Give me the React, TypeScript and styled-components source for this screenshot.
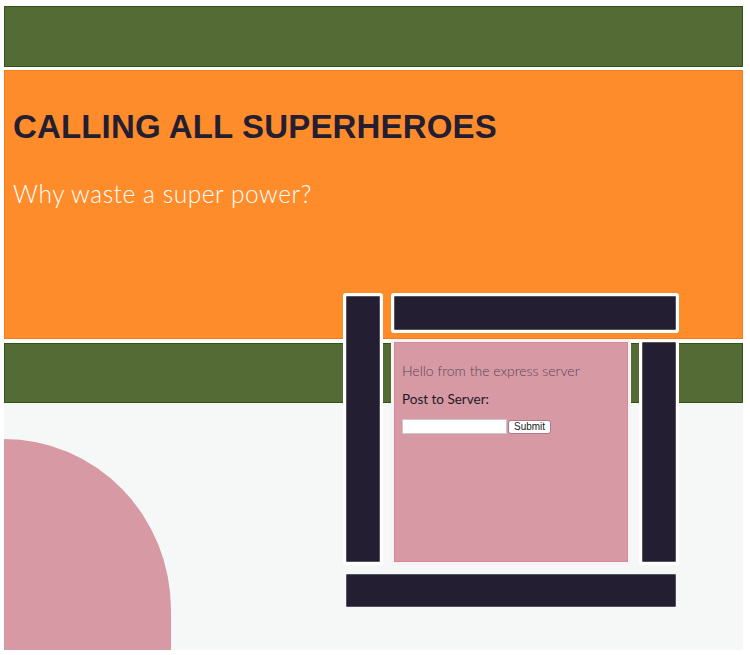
import styled, { createGlobalStyle } from 'styled-components'

const GlobalStyle = createGlobalStyle`
  body {
    margin: 0;
    background: #ffffff;
    font-family: 'Lato', 'Liberation Sans', sans-serif;
  }
`

const Page = styled.div`
  position: relative;
  width: 739px;
  margin: 6px 0 0 4px;
  display: flex;
  flex-direction: column;
`

const TopBar = styled.header`
  height: 59px;
  background: #546b36;
  border: 1px solid #2c5516;
`

const Hero = styled.section`
  margin-top: 3px;
  height: 269px;
  background: #ff8c2a;
  border: 1px solid #f47e1c;
  padding: 37px 0 0 8px;
  box-sizing: border-box;
`

const Title = styled.h1`
  margin: 0;
  font-family: 'Liberation Sans', Arial, sans-serif;
  font-weight: 700;
  font-size: 33px;
  letter-spacing: 0.15px;
  color: #241e33;
`

const Tagline = styled.p`
  margin: 33px 0 0;
  font-family: 'Lato', sans-serif;
  font-weight: 300;
  font-size: 24.5px;
  letter-spacing: 0.55px;
  color: #ffffff;
`

const NavBar = styled.nav`
  margin-top: 4px;
  height: 58px;
  background: #546b36;
  border: 1px solid #2c5516;
`

const Main = styled.main`
  height: 247px;
  background: #f5f8f7;
  padding-top: 36px;
  box-sizing: border-box;
  display: flex;
  align-items: flex-end;
`

const Blob = styled.div`
  width: 167px;
  height: 211px;
  background: #d799a4;
  border-top-right-radius: 167px 171px;
`

const Layout = styled.div`
  position: absolute;
  left: 342px;
  top: 290px;
  display: grid;
  grid-template-columns: 34px 234px 34px;
  grid-template-rows: 34px 220px 33px;
  column-gap: 14px;
  row-gap: 12px;
`

const Slab = styled.div<{ $col: string; $row: string }>`
  grid-column: ${(p) => p.$col};
  grid-row: ${(p) => p.$row};
  background: #241e33;
  border: 1px solid #55535c;
  border-radius: 1px;
  box-shadow: 0 0 0 3px ${(p) => (p.$row === '3' ? '#f5f8f7' : '#ffffff')};
`

const Content = styled.div`
  grid-column: 2;
  grid-row: 2;
  background: #d799a4;
  border: 1px solid #d58a97;
  box-shadow: 0 0 0 3px #f8f4f5;
  padding: 19px 7px 0;
  font-family: 'Lato', sans-serif;
`

const Greeting = styled.p`
  margin: 0;
  font-size: 14px;
  font-weight: 300;
  color: #574759;
`

const FormLabel = styled.p`
  margin: 12px 0 0;
  font-size: 13.5px;
  font-weight: 400;
  color: #1d1a26;
`

const Form = styled.form`
  display: flex;
  align-items: center;
  gap: 1px;
  margin-top: 12px;
`

const Field = styled.input`
  width: 105px;
  height: 15px;
  box-sizing: border-box;
  border: 1px solid #c9c9c9;
  background: #ffffff;
  font-size: 10px;
  padding: 0 2px;
`

const SubmitButton = styled.button`
  height: 14px;
  padding: 0 5px;
  font-family: 'Liberation Sans', Arial, sans-serif;
  font-size: 10px;
  line-height: 12px;
  color: #222;
  background: #ffffff;
  border: 1px solid #b07a84;
  border-radius: 3px;
`

export default function App() {
  return (
    <>
      <GlobalStyle />
      <Page>
        <TopBar />
        <Hero>
          <Title>CALLING ALL SUPERHEROES</Title>
          <Tagline>Why waste a super power?</Tagline>
        </Hero>
        <NavBar />
        <Main>
          <Blob />
        </Main>
        <Layout>
          <Slab $col="2 / 4" $row="1" />
          <Slab $col="1" $row="1 / 3" />
          <Content>
            <Greeting>Hello from the express server</Greeting>
            <FormLabel>Post to Server:</FormLabel>
            <Form onSubmit={(e) => e.preventDefault()}>
              <Field type="text" />
              <SubmitButton type="submit">Submit</SubmitButton>
            </Form>
          </Content>
          <Slab $col="3" $row="2" />
          <Slab $col="1 / 4" $row="3" />
        </Layout>
      </Page>
    </>
  )
}
